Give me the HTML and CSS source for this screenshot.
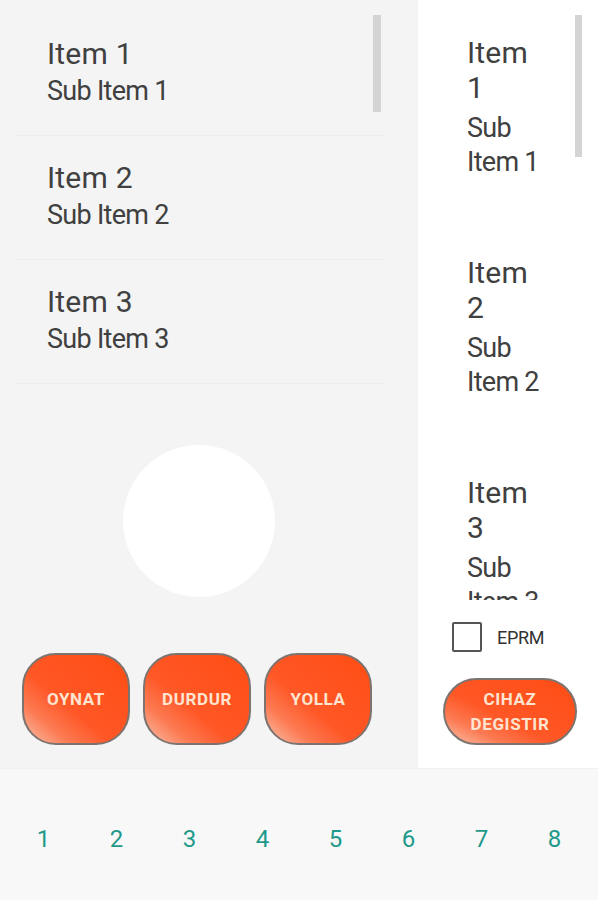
FILE: index.html
```html
<!DOCTYPE html>
<html lang="tr">
<head>
  <meta charset="UTF-8">
  <title>Kontrol</title>
  <link rel="stylesheet" href="styles.css">
</head>
<body>

  <div class="app">
    <div class="main">

      <div class="left-panel">
        <div class="list">
          <div class="list-item">
            <div class="item-title">Item 1</div>
            <div class="item-sub">Sub Item 1</div>
          </div>
          <div class="list-item">
            <div class="item-title">Item 2</div>
            <div class="item-sub">Sub Item 2</div>
          </div>
          <div class="list-item">
            <div class="item-title">Item 3</div>
            <div class="item-sub">Sub Item 3</div>
          </div>
          <div class="scrollbar"></div>
        </div>

        <div class="joystick"></div>

        <div class="controls">
          <button class="btn-orange btn-square">OYNAT</button>
          <button class="btn-orange btn-square">DURDUR</button>
          <button class="btn-orange btn-square">YOLLA</button>
        </div>
      </div>

      <div class="right-panel">
        <div class="list-narrow">
          <div class="narrow-item">
            <div class="item-title">Item 1</div>
            <div class="item-sub">Sub Item 1</div>
          </div>
          <div class="narrow-item">
            <div class="item-title">Item 2</div>
            <div class="item-sub">Sub Item 2</div>
          </div>
          <div class="narrow-item">
            <div class="item-title">Item 3</div>
            <div class="item-sub">Sub Item 3</div>
          </div>
          <div class="scrollbar scrollbar-narrow"></div>
        </div>

        <label class="check-row">
          <span class="check-box"></span>
          <span class="check-label">EPRM</span>
        </label>

        <button class="btn-orange btn-pill">CIHAZ<br>DEGISTIR</button>
      </div>

    </div>

    <div class="tabs">
      <span>1</span>
      <span>2</span>
      <span>3</span>
      <span>4</span>
      <span>5</span>
      <span>6</span>
      <span>7</span>
      <span>8</span>
    </div>
  </div>

</body>
</html>
```

FILE: styles.css
```css
body {
  margin: 0;
  font-family: Roboto, "Noto Sans", sans-serif;
  background: #f8f8f8;
  color: #404040;
}

.app {
  width: 598px;
  height: 900px;
  display: flex;
  flex-direction: column;
}

.main {
  display: flex;
  height: 768px;
}

/* left side */

.left-panel {
  width: 418px;
  background: #f4f4f4;
  display: flex;
  flex-direction: column;
}

.list {
  position: relative;
  height: 400px;
  padding: 12px 0 0 15px;
  width: 383px;
  box-sizing: border-box;
}

.list-item {
  padding: 24px 0 28px 32px;
  border-bottom: 1px solid #ececec;
}

.item-title {
  font-size: 30px;
  line-height: 35px;
  letter-spacing: 0.2px;
}

.item-sub {
  font-size: 27px;
  line-height: 32px;
  letter-spacing: -0.7px;
  margin-top: 4px;
}

.scrollbar {
  position: absolute;
  top: 15px;
  left: 373px;
  width: 8px;
  height: 97px;
  background: #d4d4d4;
}

.joystick {
  width: 152px;
  height: 152px;
  border-radius: 50%;
  background: #fff;
  margin: 45px 0 0 123px;
}

.controls {
  display: flex;
  gap: 13px;
  margin: 56px 0 0 22px;
}

/* orange buttons */

.btn-orange {
  font-family: Roboto, sans-serif;
  font-weight: bold;
  font-size: 17px;
  letter-spacing: 0.6px;
  color: #fde4d0;
  border: 2px solid #7d736f;
  background: linear-gradient(to top right, #f9c2ad 0%, #fc7a52 22%, #ff5726 42%, #ff4d14 100%);
  padding: 0;
  cursor: pointer;
}

.btn-square {
  width: 108px;
  height: 92px;
  border-radius: 34px;
}

.btn-pill {
  width: 134px;
  height: 67px;
  border-radius: 34px;
  line-height: 25px;
  margin: 26px 0 0 25px;
}

/* right side */

.right-panel {
  flex: 1;
  background: #fff;
  display: flex;
  flex-direction: column;
}

.list-narrow {
  position: relative;
  height: 600px;
  overflow: hidden;
  padding-top: 12px;
  box-sizing: border-box;
}

.narrow-item {
  padding: 23px 0 0 49px;
  width: 129px;
  height: 220px;
  box-sizing: border-box;
}

.narrow-item .item-sub {
  line-height: 34px;
  margin-top: 6px;
}

.scrollbar-narrow {
  left: 157px;
  width: 7px;
  height: 142px;
}

.check-row {
  display: flex;
  align-items: center;
  gap: 15px;
  margin: 22px 0 0 34px;
}

.check-box {
  width: 26px;
  height: 26px;
  border: 2px solid #555;
  border-radius: 2px;
}

.check-label {
  font-size: 18px;
  letter-spacing: -0.3px;
  color: #333;
}

/* bottom tabs */

.tabs {
  flex: 1;
  display: grid;
  grid-template-columns: repeat(8, 1fr);
  align-items: center;
  padding: 8px 7px 0;
  background: #f8f8f8;
  border-top: 1px solid #f0f0f0;
}

.tabs span {
  text-align: center;
  font-size: 24px;
  color: #1f9a8a;
}
```
